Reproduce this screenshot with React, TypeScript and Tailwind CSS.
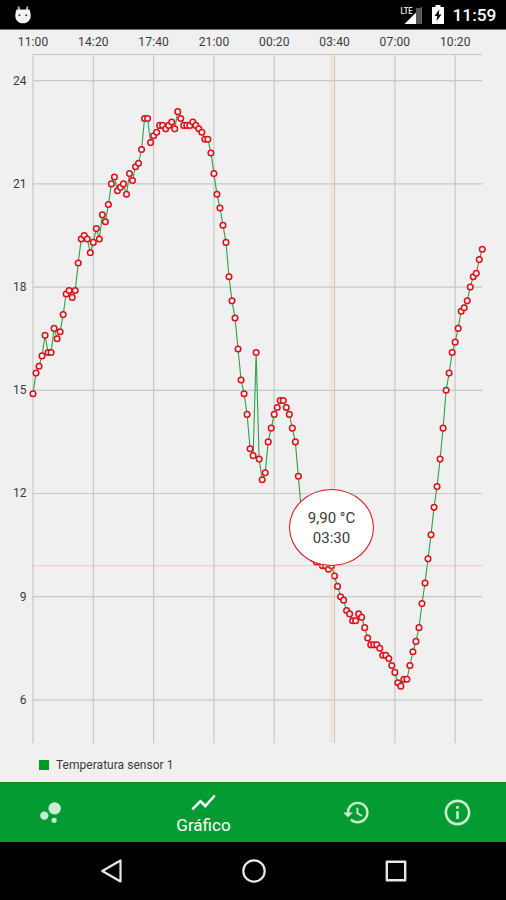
import { useState } from "react";
import type { IconType } from "react-icons";
import { MdBubbleChart, MdHistory, MdInfoOutline, MdShowChart } from "react-icons/md";

// one reading every 10 minutes, starting at 11:00
const READINGS = [
  14.9, 15.5, 15.7, 16.0, 16.6, 16.1, 16.1, 16.8, 16.5, 16.7,
  17.2, 17.8, 17.9, 17.7, 17.9, 18.7, 19.4, 19.5, 19.4, 19.0,
  19.3, 19.7, 19.4, 20.1, 19.9, 20.4, 21.0, 21.2, 20.8, 20.9,
  21.0, 20.7, 21.3, 21.1, 21.5, 21.6, 22.0, 22.9, 22.9, 22.2,
  22.4, 22.5, 22.7, 22.7, 22.6, 22.7, 22.8, 22.6, 23.1, 22.9,
  22.7, 22.7, 22.7, 22.8, 22.7, 22.6, 22.5, 22.3, 22.3, 21.9,
  21.3, 20.7, 20.3, 19.8, 19.3, 18.3, 17.6, 17.1, 16.2, 15.3,
  14.9, 14.3, 13.3, 13.1, 16.1, 13.0, 12.4, 12.6, 13.5, 13.9,
  14.3, 14.5, 14.7, 14.7, 14.5, 14.3, 13.9, 13.5, 12.5, 11.5,
  11.0, 10.6, 10.3, 10.1, 10.0, 10.0, 9.9, 9.9, 9.8, 9.9,
  9.6, 9.3, 9.0, 8.9, 8.6, 8.5, 8.3, 8.3, 8.5, 8.4,
  8.1, 7.8, 7.6, 7.6, 7.6, 7.5, 7.3, 7.3, 7.2, 7.0,
  6.8, 6.5, 6.4, 6.6, 6.6, 7.0, 7.4, 7.7, 8.1, 8.8,
  9.4, 10.1, 10.8, 11.6, 12.2, 13.0, 13.9, 15.0, 15.5, 16.1,
  16.4, 16.8, 17.3, 17.4, 17.6, 18.0, 18.3, 18.4, 18.8, 19.1,
];

const HOURS = ["11:00", "14:20", "17:40", "21:00", "00:20", "03:40", "07:00", "10:20"];
const DEGREES = [24, 21, 18, 15, 12, 9, 6];

const LEFT = 33;
const RIGHT = 482.3;
const TOP = 24.5;
const BOTTOM = 713;
const SELECTED = 99;

const px = (index: number) => LEFT + index * 3.0154;
const py = (value: number) => 50.7 + (24 - value) * 34.4;

const TABS: { label: string; Icon: IconType; size: number }[] = [
  { label: "Sensores", Icon: MdBubbleChart, size: 31 },
  { label: "Gráfico", Icon: MdShowChart, size: 29 },
  { label: "Histórico", Icon: MdHistory, size: 29 },
  { label: "Sobre", Icon: MdInfoOutline, size: 31 },
];

function StatusBar() {
  return (
    <header className="flex h-[30px] items-center border-b border-[#707070] bg-black pl-[13.5px] pr-[9px] text-white">
      <svg width="18" height="20" viewBox="0 0 18 20" fill="#f4f4f4">
        <path d="M4.500 1.500 5.500 6M13.500 1.500 12.500 6" stroke="#bbb" strokeWidth="1.800" />
        <path d="M2.500 4.500h13q1 2.500 1.200 5.500c.2 5-2.800 8.300-7.700 8.300S1.100 15 1.300 10q.2-3 1.200-5.500Z" />
        <circle cx="5.500" cy="10.300" r="1" fill="#333" />
        <circle cx="12.300" cy="10.300" r="1" fill="#333" />
      </svg>
      <div className="ml-auto flex items-center">
        <svg width="23" height="20" viewBox="0 0 23 20">
          <path d="M4.500 19 21.500 2V19Z" fill="#fff" />
          <path d="M16 3H21.500V19H16Z" fill="#555" />
          <path d="M0 0H13.500V10H0Z" fill="#000" />
          <text x="0.500" y="8.800" fontSize="9.500" fontWeight="700" textLength="12" lengthAdjust="spacingAndGlyphs" fill="#ddd">
            LTE
          </text>
        </svg>
        <svg className="ml-[9px]" width="12" height="19" viewBox="0 0 12 19">
          <path d="M3.500 0h5v2H12v17H0V2h3.500Z" fill="#fff" />
          <path d="M7.300 4.500 2.500 11h2.800l-.8 5L9.500 9.500H6.700Z" fill="#000" />
        </svg>
        <span className="ml-[8.5px] mt-[2px] w-[44.5px] whitespace-nowrap text-[17.3px] font-medium leading-none">11:59</span>
      </div>
    </header>
  );
}

function TemperatureChart() {
  const line = READINGS.map((value, i) => `${px(i)},${py(value)}`).join(" ");

  return (
    <div className="relative h-[720px]">
      <svg width="506" height="720" viewBox="0 0 506 720" className="block">
        <g stroke="#c8c8c8" strokeWidth="1.200">
          <line x1={LEFT} x2={RIGHT} y1={TOP} y2={TOP} />
          {DEGREES.map((d) => (
            <line key={d} x1={LEFT} x2={RIGHT} y1={py(d)} y2={py(d)} />
          ))}
          {HOURS.map((h, i) => (
            <line key={h} x1={px(i * 20)} x2={px(i * 20)} y1={TOP} y2={BOTTOM} />
          ))}
        </g>
        <g fontSize="12" fill="#3a3a3a">
          {HOURS.map((h, i) => (
            <text key={h} x={px(i * 20)} y="16.300" textAnchor="middle" textLength="30.500">
              {h}
            </text>
          ))}
          {DEGREES.map((d) => (
            <text key={d} x="26.500" y={py(d) + 3.800} textAnchor="end">
              {d}
            </text>
          ))}
        </g>
        <polyline points={line} fill="none" stroke="#2f9f4c" strokeWidth="1.100" />
        <g fill="#fbeeee" stroke="#d8101a" strokeWidth="1.500">
          {READINGS.map((value, i) => (
            <circle key={i} cx={px(i)} cy={py(value)} r="2.800" />
          ))}
        </g>
        <line x1={px(SELECTED)} x2={px(SELECTED)} y1={TOP} y2={BOTTOM} stroke="#ffbb73" strokeOpacity="0.35" strokeWidth="2" />
        <line x1={LEFT} x2={RIGHT} y1="535.600" y2="535.600" stroke="#ffbb63" strokeOpacity="0.55" strokeWidth="1.400" />
      </svg>
      <div className="absolute left-[289px] top-[459px] flex h-[77px] w-[85px] flex-col items-center justify-center rounded-[50%] border-[1.5px] border-[#d8101a] bg-white text-[15px] leading-[20px] text-[#3a3a3a]">
        <span>9,90 °C</span>
        <span>03:30</span>
      </div>
    </div>
  );
}

function Legend() {
  return (
    <div className="flex h-[32px] items-center pb-[3px] pl-[39px]">
      <span className="h-[10px] w-[10px] bg-[#009a1e]" />
      <span className="ml-[7px] text-[12px] tracking-[0.03px] text-[#3a3a3a]">Temperatura sensor 1</span>
    </div>
  );
}

function TabBar() {
  const [active, setActive] = useState(1);

  return (
    <nav className="flex h-[60px] border-t border-[#14891f] bg-[#049b33]">
      {TABS.map(({ label, Icon, size }, i) => (
        <button
          key={label}
          type="button"
          aria-label={label}
          onClick={() => setActive(i)}
          className={`flex shrink-0 flex-col items-center justify-center ${
            i === active ? "w-[205px] pb-[2px] text-white" : "w-[101px] pb-[1px] text-[#c9eed2]"
          }`}
        >
          <Icon size={size} />
          {i === active && <span className="-mt-[1px] text-[17px] leading-[19px]">{label}</span>}
        </button>
      ))}
    </nav>
  );
}

function SystemNav() {
  return (
    <div className="flex h-[58px] items-center justify-center gap-[118px] bg-black pl-[2px]">
      <svg width="24" height="24" viewBox="0 0 24 24" fill="none" stroke="#e8e8e8" strokeWidth="2.200" strokeLinejoin="round">
        <path d="M2.300 12 20.500 1.500V22.500Z" />
      </svg>
      <svg width="24" height="24" viewBox="0 0 24 24" fill="none" stroke="#e8e8e8" strokeWidth="2.200">
        <circle cx="12" cy="12" r="10.700" />
      </svg>
      <svg width="24" height="24" viewBox="0 0 24 24" fill="none" stroke="#e8e8e8" strokeWidth="2.400" strokeLinejoin="round">
        <path d="M2.800 2.800H21.200V21.200H2.800Z" />
      </svg>
    </div>
  );
}

export default function App() {
  return (
    <div className="flex h-[900px] w-[506px] flex-col overflow-hidden bg-[#f0f0f0] font-['Roboto',sans-serif]">
      <StatusBar />
      <TemperatureChart />
      <Legend />
      <TabBar />
      <SystemNav />
    </div>
  );
}
